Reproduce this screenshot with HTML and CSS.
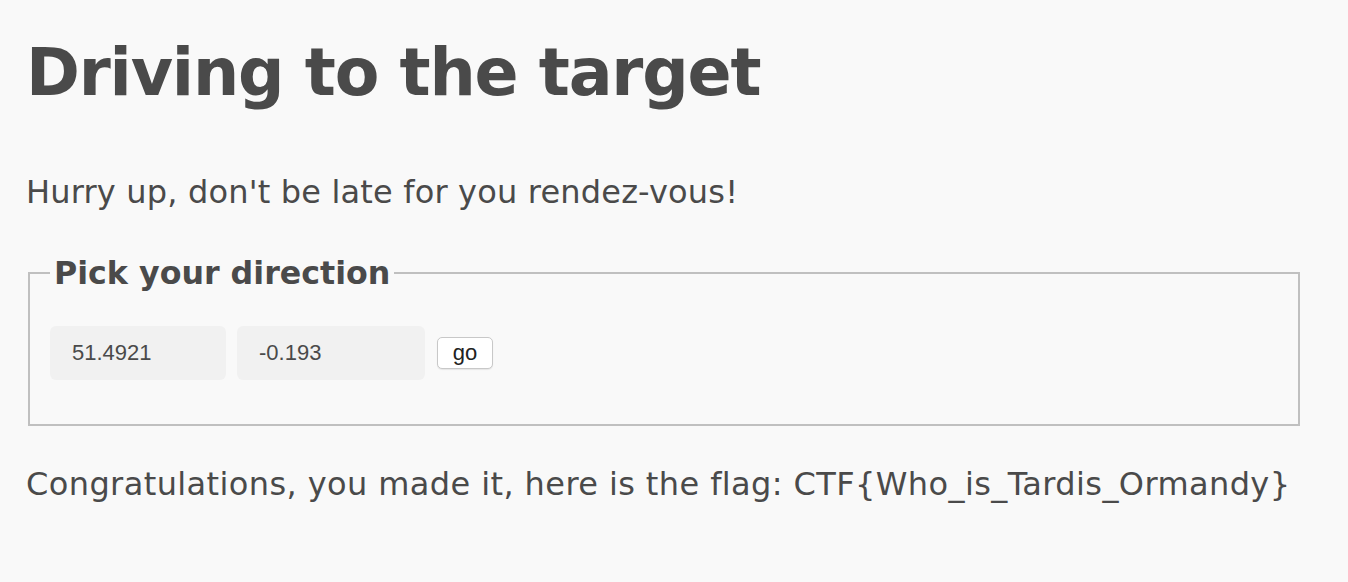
FILE: index.html
```html
<!DOCTYPE html>
<html>
<head>
<meta charset="utf-8">
<title>Driving to the target</title>
<link rel="stylesheet" href="styles.css">
</head>
<body>
<h1 class="title">Driving to the target</h1>
<p class="text intro">Hurry up, don't be late for you rendez-vous!</p>
<form class="form">
  <fieldset class="box">
    <legend class="legend">Pick your direction</legend>
    <div class="row">
      <input class="field field-lat" type="text" value="51.4921">
      <input class="field field-lon" type="text" value="-0.193">
      <button class="go" type="button">go</button>
    </div>
  </fieldset>
</form>
<p class="text flag">Congratulations, you made it, here is the flag: CTF{Who_is_Tardis_Ormandy}</p>
</body>
</html>
```
FILE: styles.css
```css
html, body {
  background: #f9f9f9;
}
body {
  margin: 0;
  padding: 0 26px;
  color: #4a4a4a;
  font-family: "DejaVu Sans", Verdana, sans-serif;
}
.title {
  margin: 35px 0 0;
  font-size: 65px;
  line-height: 76px;
  letter-spacing: -1.2px;
  font-weight: bold;
}
.text {
  font-size: 32px;
  line-height: 38px;
  margin: 0;
}
.intro {
  margin-top: 62px;
  letter-spacing: 0.18px;
}
.form {
  margin: 44px 0 0;
}
.box {
  margin: 0 22px 0 2px;
  padding: 35px 20px 44px;
  border: 2px solid #c0c0c0;
}
.legend {
  font-size: 31.7px;
  line-height: 36px;
  font-weight: bold;
  padding: 0 4px;
}
.row {
  display: flex;
  align-items: center;
  gap: 11px;
}
.field {
  box-sizing: border-box;
  height: 54px;
  border: none;
  border-radius: 6px;
  background: #f1f1f1;
  padding: 0 22px;
  font-family: "Liberation Sans", Arial, sans-serif;
  font-size: 22px;
  color: #4a4a4a;
  outline: none;
}
.field-lat { width: 176px; }
.field-lon { width: 188px; }
.go {
  margin-left: 1px;
  box-sizing: border-box;
  width: 56px;
  height: 32px;
  background: #fff;
  border: 1px solid #c8c8c8;
  border-radius: 5px;
  box-shadow: 0 1px 1px rgba(0,0,0,0.08);
  font-family: "Liberation Sans", Arial, sans-serif;
  font-size: 22px;
  color: #222;
  padding: 0;
}
.flag {
  margin-top: 39px;
  letter-spacing: 0.4px;
}
```
